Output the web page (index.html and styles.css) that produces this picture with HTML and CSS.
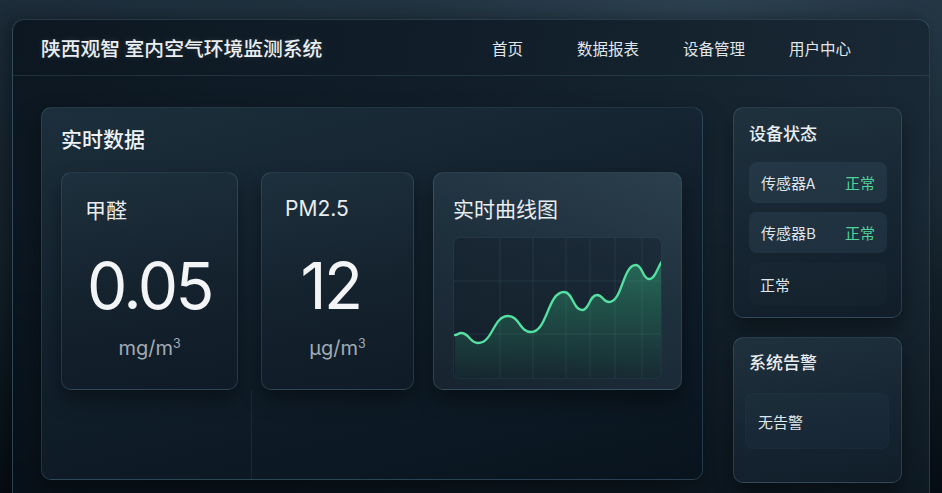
FILE: index.html
```html
<!DOCTYPE html>
<html lang="zh-CN">
<head>
<meta charset="utf-8">
<title>陕西观智 室内空气环境监测系统</title>
<link rel="stylesheet" href="styles.css">
</head>
<body>
<div class="app">
  <header class="topbar">
    <h1 class="brand">陕西观智 室内空气环境监测系统</h1>
    <nav class="nav">
      <a class="nav-item nav-first">首页</a>
      <a class="nav-item">数据报表</a>
      <a class="nav-item">设备管理</a>
      <a class="nav-item">用户中心</a>
    </nav>
  </header>
  <main class="content">
    <section class="panel realtime">
      <h2 class="panel-title">实时数据</h2>
      <div class="cards">
        <div class="card metric card-hcho">
          <div class="metric-label">甲醛</div>
          <div class="metric-value">0.05</div>
          <div class="metric-unit">mg/m<sup>3</sup></div>
        </div>
        <div class="card metric card-pm">
          <div class="metric-label latin">PM2.5</div>
          <div class="metric-value value-shift">12</div>
          <div class="metric-unit">µg/m<sup>3</sup></div>
        </div>
        <div class="card chart-card">
          <div class="metric-label">实时曲线图</div>
          <div class="chart">
            <svg viewBox="0 0 208 141" width="208" height="141" preserveAspectRatio="none">
              <defs>
                <linearGradient id="fillg" x1="0" y1="0" x2="0" y2="1">
                  <stop offset="0" stop-color="#3ccf8e" stop-opacity="0.38"/>
                  <stop offset="1" stop-color="#3ccf8e" stop-opacity="0.04"/>
                </linearGradient>
              </defs>
              <g stroke="#4f7c88" stroke-opacity="0.2" stroke-width="1">
                <line x1="46" y1="0" x2="46" y2="141"/>
                <line x1="79" y1="0" x2="79" y2="141"/>
                <line x1="112" y1="0" x2="112" y2="141"/>
                <line x1="136" y1="0" x2="136" y2="141"/>
                <line x1="161" y1="0" x2="161" y2="141"/>
                <line x1="188" y1="0" x2="188" y2="141"/>
                <line x1="0" y1="43" x2="208" y2="43"/>
                <line x1="0" y1="96" x2="208" y2="96"/>
              </g>
              <path fill="url(#fillg)" d="M1,97 C4,97 4,95 7,95 C15.5,95 15.5,105 24,105 C39,105 39,78 54,78 C65.5,78 65.5,94 77,94 C93.5,94 93.5,54 110,54 C119,54 119,72 128,72 C135.5,72 135.5,57 143,57 C149,57 149,64 155,64 C168.5,64 168.5,27 182,27 C188.5,27 188.5,41 195,41 C201.5,41 203,30 208,23 L208,141 L1,141 Z"/>
              <path fill="none" stroke="#55e0a2" stroke-width="2.3" stroke-linecap="round" d="M1,97 C4,97 4,95 7,95 C15.5,95 15.5,105 24,105 C39,105 39,78 54,78 C65.5,78 65.5,94 77,94 C93.5,94 93.5,54 110,54 C119,54 119,72 128,72 C135.5,72 135.5,57 143,57 C149,57 149,64 155,64 C168.5,64 168.5,27 182,27 C188.5,27 188.5,41 195,41 C201.5,41 203,30 208,23"/>
            </svg>
          </div>
        </div>
      </div>
    </section>
    <aside class="side">
      <section class="panel side-panel status">
        <h3 class="side-title">设备状态</h3>
        <div class="status-row"><span>传感器A</span><span class="ok">正常</span></div>
        <div class="status-row"><span>传感器B</span><span class="ok">正常</span></div>
        <div class="status-row faint"><span>正常</span></div>
      </section>
      <section class="panel side-panel alarm">
        <h3 class="side-title">系统告警</h3>
        <div class="alarm-box">无告警</div>
      </section>
    </aside>
  </main>
</div>
</body>
</html>
```
FILE: styles.css
```css
* { box-sizing: border-box; }
html, body { margin: 0; padding: 0; }
body {
  width: 942px;
  height: 493px;
  overflow: hidden;
  font-family: Inter, "Noto Sans CJK SC", "Noto Sans", sans-serif;
  color: #e6ebef;
  background:
    radial-gradient(ellipse 700px 300px at 75% 0%, #2c4150 0%, rgba(36,54,68,0.6) 45%, rgba(20,32,42,0) 100%),
    linear-gradient(180deg, #1d2d3a 0%, #132029 55%, #060d14 100%);
}
.app {
  margin: 19px 12px 0 12px;
  height: 520px;
  border: 1px solid rgba(120, 165, 185, 0.28);
  border-bottom: none;
  border-radius: 12px 12px 0 0;
  background:
    linear-gradient(180deg, rgba(0,0,0,0) 35%, rgba(2,8,14,0.55) 100%),
    linear-gradient(100deg, #0c1721 0%, #111e29 45%, #1a2a36 100%);
  box-shadow: -6px 0 18px rgba(0,0,0,0.35);
}
.topbar {
  height: 56px;
  display: flex;
  align-items: center;
  justify-content: space-between;
  padding: 0 78px 0 28px;
  border-bottom: 1px solid rgba(90, 130, 150, 0.22);
}
.brand {
  margin: 0;
  font-family: "Noto Sans CJK SC", sans-serif;
  font-size: 19.8px;
  font-weight: 500;
  color: #eaeef1;
  text-shadow: 0 0 6px rgba(255,255,255,0.12);
}
.nav { display: flex; gap: 44px; }
.nav-first { margin-right: 10px; }
.nav-item {
  font-family: "Noto Sans CJK SC", sans-serif;
  font-size: 15.5px;
  color: #e1e6ea;
  cursor: pointer;
}
.content {
  display: grid;
  grid-template-columns: 662px 169px;
  column-gap: 30px;
  padding: 31px 28px 0 28px;
}
.panel {
  border: 1px solid rgba(120, 165, 185, 0.22);
  border-radius: 10px;
}
.realtime {
  height: 373px;
  padding: 18px 20px 0 19px;
  background:
    linear-gradient(rgba(70,100,120,0.2), rgba(70,100,120,0.2)) no-repeat 209px 282px / 1px 100%,
    linear-gradient(165deg, #1d2f3c 0%, #13222e 40%, #08131d 100%);
  box-shadow: 0 10px 24px rgba(0,0,0,0.35);
}
.panel-title {
  margin: 0;
  font-family: "Noto Sans CJK SC", sans-serif;
  font-size: 21px;
  line-height: 24px;
  font-weight: 500;
  color: #eef2f4;
}
.cards {
  margin-top: 22px;
  display: flex;
}
.card {
  height: 218px;
  border-radius: 10px;
  border: 1px solid rgba(120, 165, 185, 0.2);
  background: linear-gradient(170deg, #1e303d 0%, #15232f 50%, #0f1b27 100%);
  box-shadow: 0 10px 20px rgba(0,0,0,0.4);
}
.card-hcho { width: 177px; margin-right: 23px; }
.card-pm { width: 153px; margin-right: 19px; }
.metric {
  display: flex;
  flex-direction: column;
  padding: 24px 23px 0 23px;
}
.metric-label {
  font-family: "Noto Sans CJK SC", sans-serif;
  font-size: 21px;
  line-height: 24px;
  color: #e8edf0;
}
.metric-label.latin { font-family: Inter, sans-serif; font-weight: 400; }
.metric-value {
  margin-top: 32px;
  font-family: Inter, sans-serif;
  font-size: 64px;
  line-height: 66px;
  font-weight: 400;
  letter-spacing: -2.5px;
  text-align: center;
  color: #f2f4f6;
}
.value-shift { padding-right: 14px; }
.metric-unit {
  margin-top: 18px;
  font-family: Inter, sans-serif;
  font-size: 20px;
  line-height: 22px;
  text-align: center;
  color: #a0abb5;
}
.metric-unit sup { font-size: 0.62em; vertical-align: 0.55em; line-height: 0; }
.chart-card {
  width: 249px;
  padding: 23px 20px 0 19px;
  background: linear-gradient(200deg, #2b3f4d 0%, #1f303d 45%, #17242f 100%);
}
.chart {
  margin-top: 17px;
  width: 209px;
  height: 142px;
  border: 1px solid rgba(90, 140, 160, 0.16);
  border-radius: 7px;
  overflow: hidden;
  background: rgba(10, 20, 30, 0.3);
}
.chart svg { display: block; }
.side { display: flex; flex-direction: column; gap: 19px; }
.side-panel {
  background: linear-gradient(170deg, #20313e 0%, #172633 50%, #111e2a 100%);
  box-shadow: 0 10px 20px rgba(0,0,0,0.4);
}
.status { height: 211px; padding: 14px 14px 0 15px; }
.alarm { height: 146px; padding: 13px 12px 0 11px; }
.side-title {
  margin: 0 0 18px 0;
  font-family: "Noto Sans CJK SC", sans-serif;
  font-size: 17px;
  line-height: 22px;
  font-weight: 500;
  color: #e8edf0;
}
.alarm .side-title { margin-bottom: 20px; padding-left: 4px; }
.status-row {
  height: 41px;
  margin-bottom: 9px;
  padding: 0 12px;
  display: flex;
  align-items: center;
  justify-content: space-between;
  border-radius: 8px;
  background: rgba(110, 150, 175, 0.12);
  font-family: "Noto Sans CJK SC", sans-serif;
  font-size: 15px;
  color: #dfe5e9;
}
.status-row.faint { height: 42px; margin-top: 10px; background: rgba(110, 150, 175, 0.025); padding-left: 11px; }
.ok { color: #4fd39a; }
.alarm-box {
  height: 56px;
  display: flex;
  align-items: center;
  padding-left: 12px;
  border-radius: 8px;
  background: rgba(110, 150, 175, 0.04);
  border: 1px solid rgba(110, 150, 175, 0.04);
  font-family: "Noto Sans CJK SC", sans-serif;
  font-size: 15px;
  color: #dfe5e9;
}
```
